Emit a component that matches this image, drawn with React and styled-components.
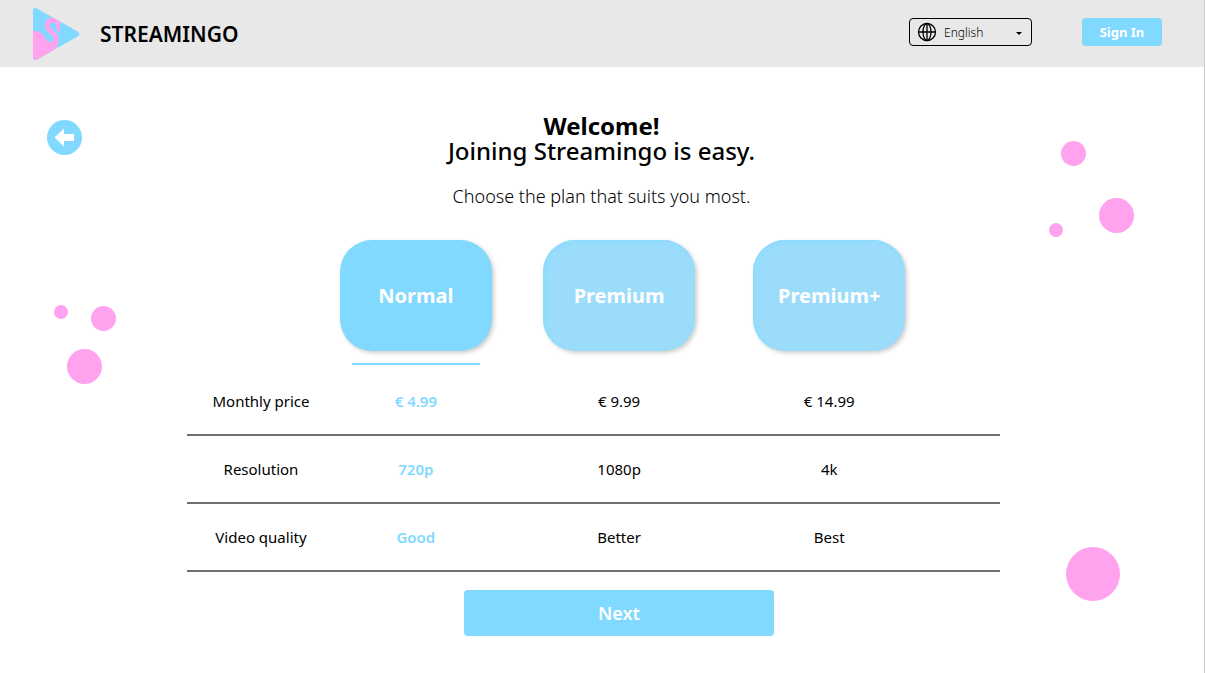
import React, { useState } from 'react';
import styled, { createGlobalStyle } from 'styled-components';

const GlobalStyle = createGlobalStyle`
  *, *::before, *::after { box-sizing: border-box; }
  body {
    margin: 0;
    background: #fff;
    color: #000;
    font-family: 'Noto Sans', 'Open Sans', sans-serif;
  }
  button, select { font-family: inherit; cursor: pointer; }
`;

const Page = styled.div`
  position: relative;
  min-height: 100vh;
  border-right: 1px solid #ccc;
  overflow: hidden;
`;

const Header = styled.header`
  display: flex;
  align-items: center;
  height: 67px;
  padding: 0 42px 3px 32px;
  background: #e8e8e8;
`;

const Brand = styled.a`
  display: flex;
  align-items: center;
  gap: 20px;
  margin-right: auto;
  padding-top: 4px;
  color: #000;
  font-size: 21px;
  font-weight: 600;
  line-height: 28px;
  text-decoration: none;
`;

const LanguagePicker = styled.label`
  display: grid;
  grid-template-columns: 35px 1fr 20px;
  align-items: center;
  width: 123px;
  height: 28px;
  margin-right: 50px;

  > * { grid-row: 1; }
  svg { pointer-events: none; z-index: 1; }
`;

const GlobeIcon = styled.svg`
  grid-column: 1;
  margin-left: 8px;
`;

const CaretIcon = styled.svg`
  grid-column: 3;
`;

const LanguageSelect = styled.select`
  grid-column: 1 / -1;
  height: 28px;
  padding: 0 20px 0 34px;
  appearance: none;
  border: 1px solid #000;
  border-radius: 4px;
  background: transparent;
  color: #000;
  font-size: 12px;
  font-weight: 350;
`;

const PrimaryButton = styled.button`
  width: ${(p) => (p.$large ? 310 : 80)}px;
  height: ${(p) => (p.$large ? 46 : 28)}px;
  padding: 0;
  border: 0;
  border-radius: 4px;
  background: #82d9ff;
  color: #fff;
  font-size: ${(p) => (p.$large ? 18 : 13)}px;
  font-weight: ${(p) => (p.$large ? 600 : 700)};
`;

const Main = styled.main`
  display: grid;
  grid-template-columns: 187fr 813fr 204fr;
`;

const Side = styled.div`
  padding: 53px 0 0 47px;
`;

const BackButton = styled.button`
  display: block;
  width: 35px;
  height: 35px;
  padding: 0;
  border: 0;
  border-radius: 50%;
  background: #82d9ff;

  svg { display: block; }
`;

const Content = styled.div`
  padding-top: 46px;
`;

const Intro = styled.div`
  padding-left: 16px;
  text-align: center;
`;

const Title = styled.h1`
  margin: 0 0 19px;
  font-size: 24px;
  font-weight: 500;
  line-height: 25px;

  strong { display: block; font-weight: 700; }
`;

const Subtitle = styled.p`
  margin: 0 0 30px;
  font-size: 18px;
  font-weight: 350;
  line-height: 28px;
`;

const PlanTable = styled.table`
  width: 100%;
  table-layout: fixed;
  border-collapse: collapse;
`;

const Column = styled.col`
  width: ${(p) => p.$share}%;
`;

const PlanHead = styled.th`
  height: 127px;
  padding: 0;
  vertical-align: top;
`;

const PlanCard = styled.button`
  display: block;
  width: 152px;
  height: 111px;
  margin: 0 auto;
  padding: 0;
  border: 0;
  border-radius: 32px;
  background: ${(p) => (p.$active ? '#82d9ff' : '#9bdcfa')};
  box-shadow: 2px 2px 4px rgba(0, 0, 0, 0.2)
    ${(p) => (p.$active ? '' : ', inset 2px 2px 5px #8cdcff')};
  color: #fff;
  font-size: 20px;
  font-weight: 700;
`;

const Underline = styled.div`
  width: 128px;
  height: 2px;
  margin: 12px auto 0;
  background: #82d9ff;
`;

const Row = styled.tr`
  height: 68px;
  border-bottom: 2px solid #707070;
`;

const Label = styled.th`
  padding: 0;
  font-size: 15px;
  font-weight: 400;
`;

const Value = styled.td`
  padding: 0;
  color: ${(p) => (p.$active ? '#82d9ff' : '#000')};
  font-size: 15px;
  font-weight: ${(p) => (p.$active ? 600 : 400)};
  text-align: center;
`;

const Actions = styled.div`
  display: flex;
  justify-content: center;
  padding: 18px 0 37px 51px;
`;

const Bubble = styled.span`
  position: absolute;
  top: ${(p) => p.$top}px;
  ${(p) => p.$side}: ${(p) => p.$offset}px;
  width: ${(p) => p.$size}px;
  height: ${(p) => p.$size}px;
  border-radius: 50%;
  background: #ffa3ee;
`;

const bubbles = [
  { side: 'right', offset: 118, top: 141, size: 25 },
  { side: 'right', offset: 70, top: 198, size: 35 },
  { side: 'right', offset: 141, top: 223, size: 14 },
  { side: 'left', offset: 54, top: 305, size: 14 },
  { side: 'left', offset: 91, top: 306, size: 25 },
  { side: 'left', offset: 67, top: 349, size: 35 },
  { side: 'right', offset: 84, top: 547, size: 54 },
];

const plans = ['Normal', 'Premium', 'Premium+'];

const features = [
  { label: 'Monthly price', values: ['€ 4.99', '€ 9.99', '€ 14.99'] },
  { label: 'Resolution', values: ['720p', '1080p', '4k'] },
  { label: 'Video quality', values: ['Good', 'Better', 'Best'] },
];

function Logo() {
  return (
    <svg width="48" height="54" viewBox="0 0 48 54" aria-hidden="true">
      <defs>
        <clipPath id="play">
          <path d="M1 4 Q1 0 5 1.500 L45.500 24.500 Q49 27 45.500 29.500 L5 52.500 Q1 54 1 50 Z" />
        </clipPath>
      </defs>
      <g clipPath="url(#play)">
        <rect width="48" height="54" fill="#82d9ff" />
        <path
          d="M0 24.200 C6 23.500 10 25.500 12.500 29.500 C14 33 16 35.500 19 35 C22 34 22.500 31 20 28.500 C17 25.500 12.700 23 12.700 18.300 C12.700 13.500 17 10.300 21.500 10.300 C26 10.500 28.500 13.500 28.300 18.500 C28.200 21.500 27.800 24.500 26 26.500 C25.500 24.500 26.300 22.500 24.500 21.500 C23.500 21 24.800 18.500 24 16.800 C23 15 19.500 15 18 17.200 C17 19.500 19 21.500 21.500 23.500 C25.500 26.800 27.500 31 26.300 35.500 C25.800 38 24.500 40 23 42 L6 54 L0 54 Z"
          fill="#ffa3ee"
        />
      </g>
    </svg>
  );
}

export default function App() {
  const [selected, setSelected] = useState(0);

  return (
    <>
      <GlobalStyle />
      <Page>
        <Header>
          <Brand href="#">
            <Logo />
            STREAMINGO
          </Brand>
          <LanguagePicker>
            <GlobeIcon width="20" height="20" viewBox="0 0 20 20" fill="none" stroke="#000" strokeWidth="1.3" aria-hidden="true">
              <circle cx="10" cy="10" r="8.500" />
              <ellipse cx="10" cy="10" rx="4" ry="8.500" />
              <path d="M1.500 10 H18.500 M10 1.500 V18.500" />
            </GlobeIcon>
            <LanguageSelect aria-label="Language" defaultValue="English">
              <option>English</option>
            </LanguageSelect>
            <CaretIcon width="20" height="10" viewBox="0 0 20 10" aria-hidden="true">
              <path d="M4 5 H10 L7 8 Z" fill="#000" />
            </CaretIcon>
          </LanguagePicker>
          <PrimaryButton type="button">Sign In</PrimaryButton>
        </Header>

        <Main>
          <Side>
            <BackButton type="button" aria-label="Back">
              <svg width="35" height="35" viewBox="0 0 35 35" aria-hidden="true">
                <path d="M7.500 17.500 L17 8.500 V14 H27 V21 H17 V26.500 Z" fill="#fff" />
              </svg>
            </BackButton>
          </Side>

          <Content>
            <Intro>
              <Title>
                <strong>Welcome!</strong>
                Joining Streamingo is easy.
              </Title>
              <Subtitle>Choose the plan that suits you most.</Subtitle>
            </Intro>

            <PlanTable>
              <colgroup>
                <Column $share={18.2} />
                <Column $share={19.9} />
                <Column $share={30.1} />
                <Column $share={21.6} />
                <Column $share={10.2} />
              </colgroup>
              <thead>
                <tr>
                  <td />
                  {plans.map((plan, i) => (
                    <PlanHead key={plan} scope="col">
                      <PlanCard
                        type="button"
                        $active={i === selected}
                        aria-pressed={i === selected}
                        onClick={() => setSelected(i)}
                      >
                        {plan}
                      </PlanCard>
                      {i === selected && <Underline />}
                    </PlanHead>
                  ))}
                  <td />
                </tr>
              </thead>
              <tbody>
                {features.map(({ label, values }) => (
                  <Row key={label}>
                    <Label scope="row">{label}</Label>
                    {values.map((value, i) => (
                      <Value key={value} $active={i === selected}>
                        {value}
                      </Value>
                    ))}
                    <td />
                  </Row>
                ))}
              </tbody>
            </PlanTable>

            <Actions>
              <PrimaryButton type="button" $large>
                Next
              </PrimaryButton>
            </Actions>
          </Content>
        </Main>

        {bubbles.map(({ side, offset, top, size }) => (
          <Bubble key={`${side}-${top}`} $side={side} $offset={offset} $top={top} $size={size} aria-hidden="true" />
        ))}
      </Page>
    </>
  );
}
